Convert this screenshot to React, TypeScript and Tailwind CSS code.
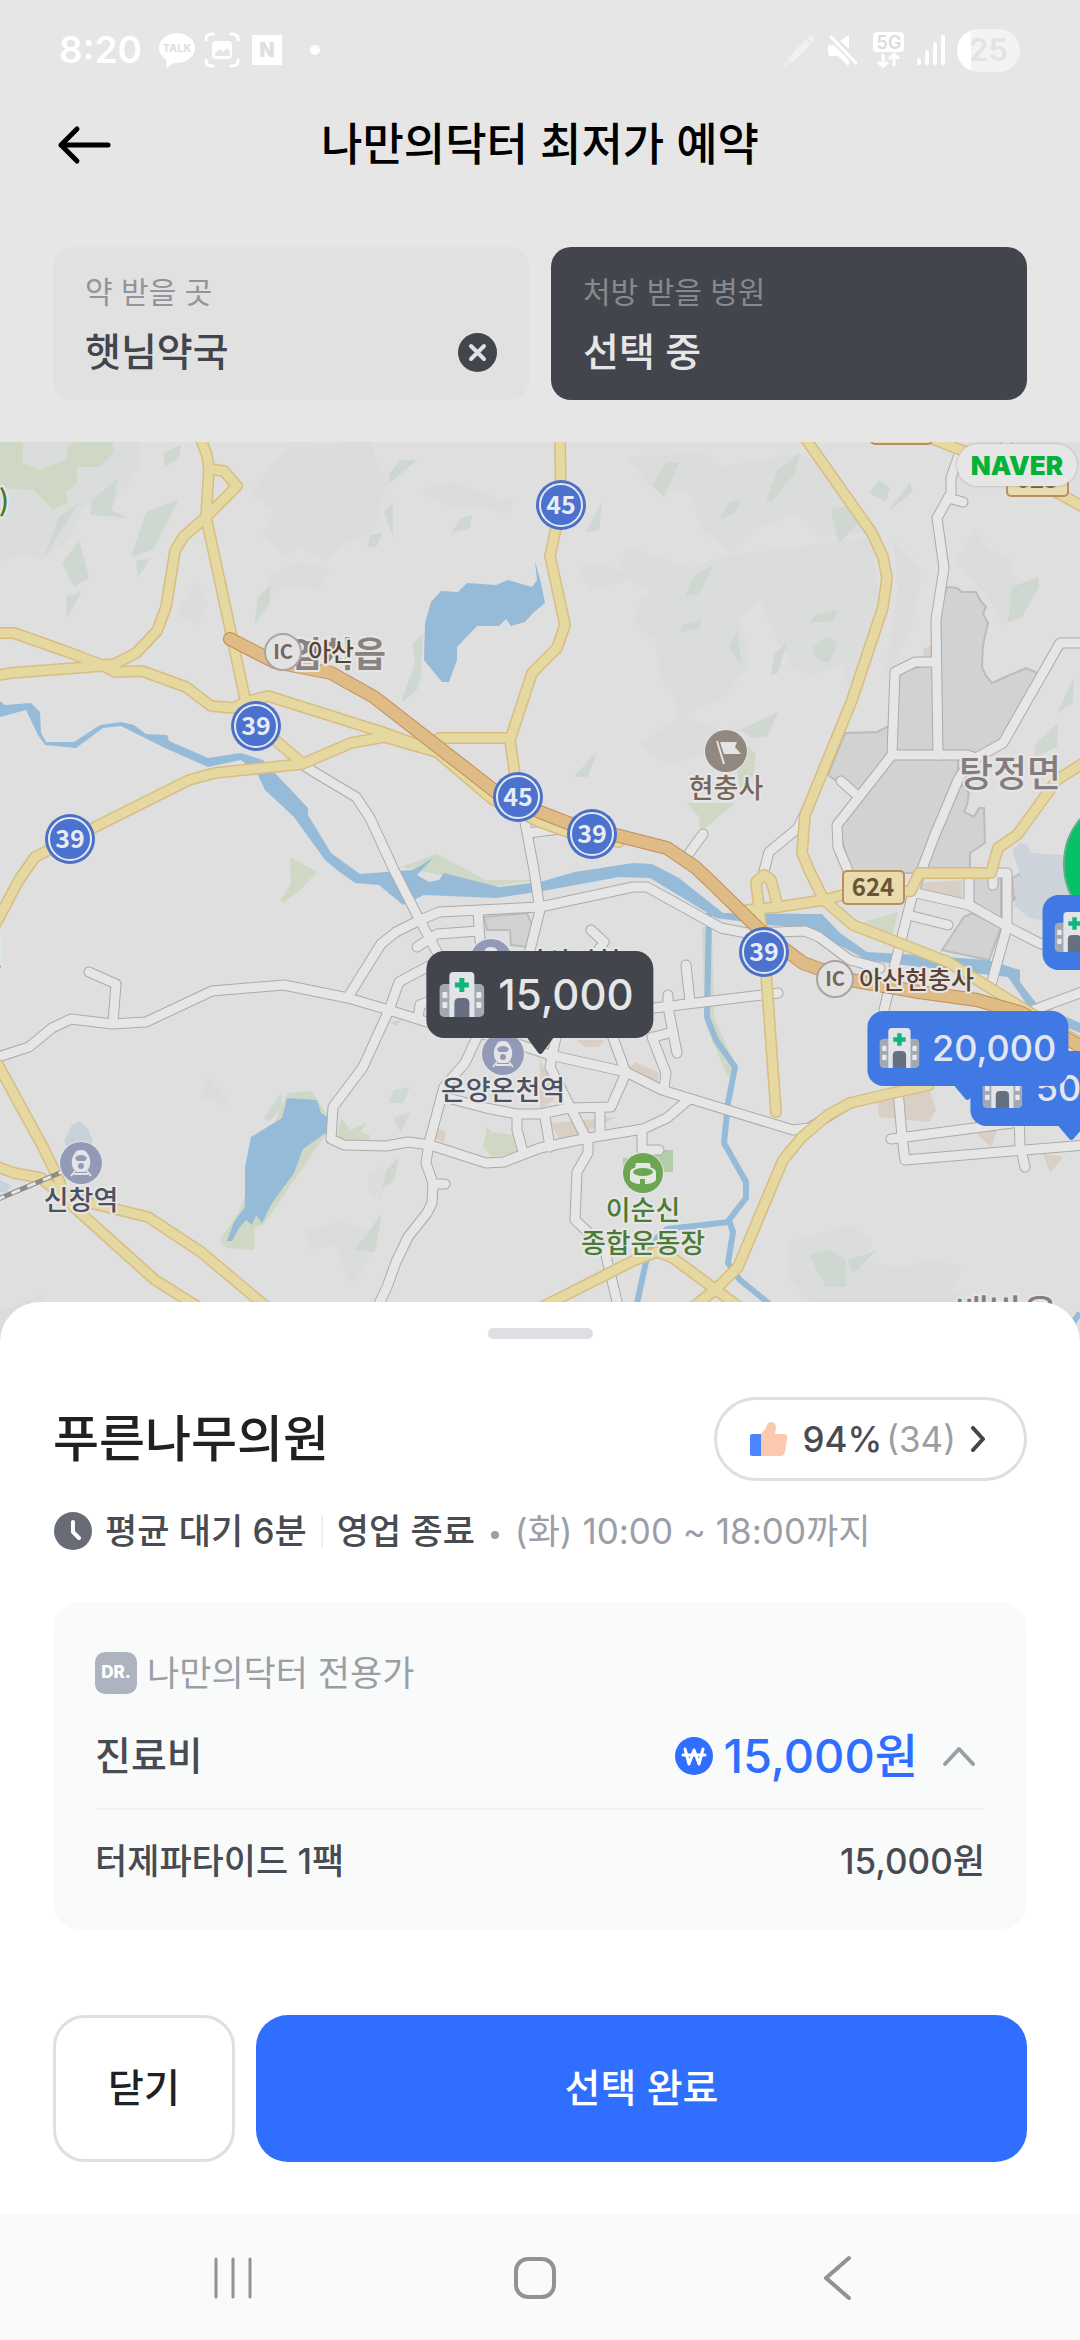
import React from "react";

/* ---------- Map data, in map units (1080 wide) ---------- */

const FAINT = [
  "24,442 141,442 139,467 114,502 83,507 69,540 41,560 21,553 0,563 0,442",
  "290,448 350,442 372,442 378,470 389,480 380,505 375,533 350,540 327,560 300,548 286,557 262,535 275,510 250,495 268,470",
  "270,575 300,562 330,570 320,590 290,585 262,600",
  "420,490 455,482 500,500 515,497 508,515 480,505 455,510",
  "176,615 195,582 208,603 198,625",
  "626,457 705,453 719,467 800,453 840,477 870,533 822,537 795,513 750,532 731,553 700,527 692,493 654,490",
  "578,570 597,562 620,572 626,547 657,557 690,568 712,560 730,555 790,548 871,537 880,600 866,660 850,690 843,663 815,675 795,670 778,640 760,600 740,620 750,665 720,700 678,717 672,690 660,680 655,640 633,623 640,600 654,590 630,580 592,590",
  "893,540 922,570 912,627 884,680 890,640 898,590",
  "640,745 680,715 720,730 740,725 735,745 700,755 665,765",
  "306,1230 341,1222 370,1230 375,1250 362,1270 350,1285 335,1245 308,1249",
  "368,1175 384,1165 382,1200 370,1195",
  "207,1077 227,1097 229,1107 200,1097",
  "0,1312 46,1293 43,1310 30,1345 0,1345",
  "786,1243 850,1225 872,1240 866,1262 902,1267 936,1260 962,1267 953,1290 984,1307 815,1307 791,1280",
  "955,560 975,530 990,550 1010,560 1020,600 1005,625 990,600",
];

const SHADES = [
  "146,512 179,499 153,550 131,557",
  "79,540 89,578 74,587 62,563",
  "43,560 59,517 79,503",
  "92,500 118,478 112,510 128,518 90,515",
  "164,453 181,445 179,458 164,468",
  "136,560 150,559 138,577",
  "66,597 82,591 67,618",
  "258,597 271,585 269,605 254,624",
  "389,473 401,460 417,460 389,484",
  "384,512 393,502 393,537",
  "451,533 461,518 472,515 470,528",
  "367,548 370,535 382,533 377,546",
  "401,703 415,663 413,643 423,634 421,677 417,690",
  "652,485 667,462 679,463 664,497",
  "766,500 778,470 800,453 795,473 771,502",
  "719,520 728,503 741,499 735,513",
  "831,510 855,503 864,517 839,543",
  "869,493 879,480 890,488 886,502",
  "888,511 910,483 913,492",
  "685,597 693,577 713,565 700,593",
  "809,623 815,615 838,609 833,621",
  "813,647 826,637 838,642 829,663 814,657",
  "729,648 738,629 741,665",
  "771,675 774,655 787,642 778,673",
  "740,730 778,712 767,737 753,738",
  "680,633 682,625 701,620 701,628",
  "1012,587 1038,577 1039,587 1022,617 1008,622",
  "1057,713 1074,677 1073,703",
  "1034,757 1036,743 1058,723 1057,747",
  "573,777 597,752 588,777",
  "585,533 602,502 599,530",
  "264,1118 281,1092 282,1107 269,1122",
  "389,1103 394,1090 410,1087 403,1103",
  "393,1118 410,1112 401,1133",
  "382,1190 386,1170 399,1157 394,1180",
  "355,1250 382,1213 375,1252",
  "809,1255 831,1250 846,1260 846,1287 826,1287",
  "848,1260 877,1250 853,1274",
];

const PARKS = [
  "0,442 23,442 22,463 40,470 65,460 68,446 75,442 112,442 114,452 100,467 77,467 77,483 66,492 68,502 53,510 34,490 0,488",
  "687,803 735,803 705,828 700,828 699,817",
  "747,745 756,755 753,777 740,790 735,760",
  "287,1093 312,1091 319,1103 329,1118 327,1133 263,1225 255,1227 254,1250 226,1248 220,1240 238,1213",
  "341,1118 351,1130 368,1122 360,1132 370,1135 368,1141 337,1139",
  "290,857 317,872 303,887 284,903 280,901 291,883",
  "487,1127 492,1132 513,1135 517,1153 492,1157 483,1147",
  "401,867 437,854 486,880 540,880 487,887 440,875",
  "860,923 898,912 892,937",
  "702,927 712,927 714,1017 736,1067 728,1078 705,1023",
];

const TAN = [
  "877,1100 929,1088 936,1110 929,1122 879,1117",
  "976,1133 998,1128 991,1147",
  "1043,1153 1063,1157 1050,1173",
  "576,1040 605,1040 598,1047 585,1047",
  "626,1070 636,1062 659,1073 657,1083 643,1080",
  "540,1060 549,1077 554,1100 540,1110",
  "550,1123 616,1117 595,1128 560,1140",
  "437,1127 446,1133 444,1143 432,1137",
  "922,883 962,880 962,898 915,890",
  "389,1022 402,1020 396,1026",
  "923,650 932,644 934,657 924,660",
];

const DISTRICTS = [
  "947,587 957,588 962,592 976,592 980,600 986,607 983,614 988,623 983,645 982,667 986,676 992,683 1010,675 1026,668 1038,673 1003,743 976,755 938,752 936,620",
  "895,672 936,663 938,755 893,755",
  "845,733 877,732 891,725 891,757 859,797 828,775",
  "893,758 958,758 958,780 934,837 919,873 852,873 837,825",
  "969,793 967,805 964,812 974,817 979,808 984,808 985,843 970,853 970,870 919,873 958,780",
  "964,917 972,913 1001,927 989,960 942,950",
  "972,877 1001,877 1001,920 972,903",
  "1012,878 1020,874 1026,885 1014,900",
  "484,917 527,913 534,930 527,947 511,945 510,930 487,930",
];

const LAKES = [
  "441,591 458,592 467,583 496,585 508,580 532,587 537,580 535,561 541,583 545,603 534,612 525,622 511,626 506,619 499,626 477,626 457,647 457,660 449,682 442,682 424,660 425,623 431,602",
  "287,1098 317,1100 321,1113 329,1118 327,1132 303,1149 294,1173 272,1203 262,1223 256,1215 252,1225 246,1220 239,1228 232,1241 227,1241 234,1222 245,1207 245,1167 251,1137 282,1118",
  "0,701 5,705 31,703 40,712 41,733 46,742 74,742 100,725 121,722 134,725 146,734 167,735 169,741 208,758 241,753 263,760 275,773 308,808 308,815 331,853 360,874 413,870 433,858 417,875 429,882 439,880 444,873 499,887 540,882 575,872 633,863 652,864 679,878 723,913 822,914 840,933 867,952 919,955 988,960 1020,970 1020,982 1036,1003 1080,1023 1080,1033 1032,1012 1008,977 919,967 867,960 833,942 805,927 767,925 716,918 650,878 619,877 543,891 496,898 424,895 403,905 379,885 355,883 337,870 325,860 294,817 265,790 258,775 241,760 208,767 165,748 121,726 103,728 76,748 45,745 38,735 26,710 0,717",
];

const LOCAL_ROADS = [
  "306,767 319,775 356,797 370,818 394,870 418,917 437,952",
  "-5,1058 29,1047 52,1028 71,1019 112,1024 146,1022 212,991 284,985 348,998 389,1010 427,1022 500,1038 550,1055 626,1072 662,1090 688,1098 793,1130 809,1128 850,1103",
  "89,972 116,984 113,1023",
  "348,997 381,944 396,932 418,921 439,912 540,907 633,887 647,887 721,928 747,933 805,931 819,937 850,960 880,968",
  "417,947 437,934 479,931",
  "478,912 480,940 484,965",
  "525,822 534,870 540,910 530,950 524,975",
  "528,833 560,829",
  "440,960 399,982 389,1010 363,1067 333,1107 331,1139 344,1145 386,1146 408,1142 430,1145 486,1163 504,1162 540,1148 588,1138 643,1129 667,1118 688,1100",
  "418,1018 420,1005 432,1000",
  "478,1035 465,1063 444,1087 429,1143 426,1163 433,1183 432,1203 427,1213 408,1237 396,1262 387,1287 376,1310",
  "433,1184 445,1184",
  "444,1097 486,1108 517,1114 540,1114 569,1108 611,1107 626,1073 612,1035",
  "517,1115 517,1130 523,1152",
  "545,1117 550,1147",
  "556,1037 550,1067 588,1142 588,1153 577,1172 575,1220 604,1247 619,1310",
  "600,1108 600,1133",
  "642,1132 642,1150 659,1150",
  "654,1008 778,993",
  "686,965 690,1002",
  "668,995 668,1007 677,1053",
  "654,1037 673,1032",
  "652,1037 666,1073 664,1088",
  "591,930 604,942 597,952",
  "1007,440 1003,460",
  "960,452 951,478 951,493 937,518 944,568 936,620 938,755",
  "948,498 963,502",
  "936,662 915,662 895,672 892,755 859,797 837,825 838,847 852,880",
  "841,781 859,797",
  "893,755 967,755 976,758 1003,743 1060,643 1085,643",
  "972,758 958,780 934,837 919,877 912,897 896,960 884,1010",
  "912,892 969,905 1008,927 1039,943 1060,950",
  "969,880 969,905",
  "985,873 1007,873 1007,927 991,985",
  "908,915 948,925",
  "993,873 993,885",
  "815,792 798,828 769,852 763,875",
  "703,834 690,852",
  "898,1090 902,1137 905,1160 1085,1145",
  "891,1139 1012,1123",
  "1019,1120 1020,1145 1025,1167",
  "1020,1015 1085,991",
];

const MAIN_ROADS = [
  "201,440 207,455 209,469 206,517 231,633 245,699",
  "209,469 224,471 237,486 206,517 183,537 175,551 166,607 157,631 136,653 115,664 102,665",
  "-5,633 14,633 65,651 102,665 115,672 142,671 186,687 211,706 234,708 245,702 268,696 382,732 437,752 492,799 540,822 568,832 619,842",
  "-5,676 10,673 102,666",
  "257,730 275,740 302,763",
  "-5,925 19,880 35,857 69,840 189,780 215,773 302,764 351,743 384,737 437,752",
  "427,747 439,738 509,738",
  "560,440 561,505 550,556 565,625 557,648 532,673 510,740 517,790",
  "805,438 872,533 883,557 887,578 883,607 852,700 805,815 802,853 809,870 824,900 853,925 948,962 1029,1012 1085,1046",
  "930,438 1000,465 1060,494 1085,508",
  "1085,762 1057,780 1017,835 998,848 991,873 919,873 911,891 843,895 824,900 778,907 747,910",
  "762,935 756,882 764,875 771,880 778,907",
  "763,930 766,973 776,1112",
  "929,1085 884,1095 850,1103 828,1115 802,1137 783,1160 738,1267 717,1288 690,1310",
  "540,1308 635,1260 657,1252 673,1258 743,1310",
  "-2,1065 43,1147 59,1180 64,1198 86,1218 155,1280 203,1310",
  "-2,1167 14,1173 41,1178 62,1195 90,1203 148,1217 201,1252 270,1310",
];

const HIGHWAY =
  "230,639 275,662 331,673 374,697 496,792 540,812 568,823 667,848 695,867 712,883 762,932 803,963 850,980 919,992 977,1000 1022,1013 1090,1052";

const STREAMS = [
  "709,913 707,1017 716,1040 735,1067 728,1103 724,1143 746,1182 746,1198 729,1220 733,1232 728,1263 740,1280 772,1306",
  "729,1222 667,1229 655,1240 647,1257 636,1308",
  "1080,1313 1071,1325 1060,1342",
];

const SHIELDS = [
  { x: 256, y: 726, n: "39" },
  { x: 70, y: 839, n: "39" },
  { x: 518, y: 797, n: "45" },
  { x: 561, y: 505, n: "45" },
  { x: 592, y: 834, n: "39" },
  { x: 764, y: 952, n: "39" },
];

const MAP_FONT = "font-['Noto_Sans_CJK_KR',sans-serif]";

type Line = { points: string[]; edge: string; fill: string; outer: number; inner: number };

function Roads({ points, edge, fill, outer, inner }: Line) {
  return (
    <g fill="none" strokeLinejoin="round" strokeLinecap="round">
      {points.map((p) => (
        <polyline key={p} points={p} stroke={edge} strokeWidth={outer} />
      ))}
      {points.map((p) => (
        <polyline key={p} points={p} stroke={fill} strokeWidth={inner} />
      ))}
    </g>
  );
}

function Areas({ points, fill, stroke }: { points: string[]; fill: string; stroke?: string }) {
  return (
    <g fill={fill} stroke={stroke ?? "none"} strokeWidth={2}>
      {points.map((p) => (
        <polygon key={p} points={p} />
      ))}
    </g>
  );
}

type LabelProps = {
  x: number;
  y: number;
  size: number;
  color: string;
  children: string;
  anchor?: "start" | "middle" | "end";
  weight?: number;
};

function Label({ x, y, size, color, children, anchor = "middle", weight = 500 }: LabelProps) {
  return (
    <text
      x={x}
      y={y}
      fontSize={size}
      fill={color}
      textAnchor={anchor}
      fontWeight={weight}
      stroke="#e6e6e6"
      strokeWidth={4}
      strokeLinejoin="round"
      paintOrder="stroke"
    >
      {children}
    </text>
  );
}

function Station({ x, y }: { x: number; y: number }) {
  return (
    <g transform={`translate(${x} ${y})`}>
      <circle r="22" fill="#e6e6e6" />
      <circle r="21" fill="#929ab8" />
      <path
        d="M-6-10Q-5-13 0-13Q5-13 6-10Q10-5 9 2Q8 7 4 9H-4Q-8 7-9 2Q-10-5-6-10Z"
        fill="#e4e4e6"
      />
      <path d="M-6-5Q-4-8 0-8Q4-8 6-5L4-2H-4Z" fill="#929ab8" />
      <circle cy="3" r="3" fill="#929ab8" />
      <path d="M-6 8L-10 13M6 8L10 13M-7 11H7" stroke="#e4e4e6" strokeWidth="2" fill="none" />
    </g>
  );
}

function RouteSign({ x, y, n }: { x: number; y: number; n: string }) {
  return (
    <g>
      <rect x={x} y={y} width="61" height="33" rx="4" fill="#e8dcae" stroke="#b98f62" strokeWidth="2" />
      <text x={x + 30} y={y + 25} fontSize="24" fontWeight="700" fill="#6b5538" textAnchor="middle">
        {n}
      </text>
    </g>
  );
}

function Interchange({ x, y }: { x: number; y: number }) {
  return (
    <g>
      <circle cx={x} cy={y} r="18" fill="#e2e2e2" stroke="#aaa4a1" strokeWidth="2" />
      <text x={x} y={y + 7} fontSize="20" fontWeight="700" fill="#76665b" textAnchor="middle">
        IC
      </text>
    </g>
  );
}

function MapDrawing() {
  return (
    <svg viewBox="0 442 1080 900" className={`block h-auto w-full bg-[#dfdfdf] ${MAP_FONT}`} role="img" aria-label="지도">
      <Areas points={FAINT} fill="#dadddb" />
      <Areas points={SHADES} fill="#cfd7d1" />
      <Areas points={PARKS} fill="#cfd8c5" />
      <Areas points={TAN} fill="#dacfc5" />
      <Areas points={DISTRICTS} fill="#d2d2d2" stroke="#bcbcbc" />
      <polygon points="655,1150 673,1150 673,1172 623,1172 623,1158 654,1158" fill="#b2cda9" />
      <polygon
        points="1012,850 1020,843 1028,845 1030,853 1063,855 1080,850 1080,935 1050,922 1029,918 1014,905 1022,880"
        fill="#ccd3da"
      />
      <polygon points="64,1141 72,1125 79,1121 88,1129 93,1141 86,1155 70,1155" fill="#c8d2da" />
      <polygon points="0,1180 12,1186 6,1192 0,1192" fill="#c8d2da" />
      <Areas points={LAKES} fill="#95bbd9" />
      <g fill="none" stroke="#95bbd9" strokeWidth="6" strokeLinejoin="round">
        {STREAMS.map((p) => (
          <polyline key={p} points={p} />
        ))}
      </g>
      <Roads points={LOCAL_ROADS} edge="#ababab" fill="#e6e6e6" outer={11} inner={9} />
      <Roads points={MAIN_ROADS} edge="#d8bd82" fill="#e5d9a1" outer={12} inner={9} />
      <Roads points={[HIGHWAY]} edge="#c58c56" fill="#dfbb86" outer={14} inner={12} />
      <path d="M-4 1200L62 1172" stroke="#8f8b88" strokeWidth="5" />
      <path d="M-4 1200L62 1172" stroke="#e6e6e6" strokeWidth="3" strokeDasharray="9 8" />

      <Label x={386} y={667} size={35} color="#89827f" anchor="end" weight={700}>염치읍</Label>
      <Interchange x={283} y={652} />
      <Label x={308} y={661} size={25} color="#5c432f" anchor="start">아산</Label>
      <Label x={9} y={511} size={29} color="#457a35" anchor="end">)</Label>
      <Label x={4} y={966} size={36} color="#857d7c" anchor="end">선장면</Label>
      <Label x={1010} y={787} size={37} color="#857d7c">탕정면</Label>
      <Label x={1006} y={1327} size={37} color="#857d7c">배방읍</Label>

      {SHIELDS.map((s) => (
        <g key={`${s.x}-${s.y}`}>
          <circle cx={s.x} cy={s.y} r="25" fill="#4a70c8" />
          <circle cx={s.x} cy={s.y} r="21" fill="#4c72cf" stroke="#e6e9f2" strokeWidth="2" />
          <text x={s.x} y={s.y + 9} fontSize="25" fontWeight="700" fill="#e8ebf3" textAnchor="middle">
            {s.n}
          </text>
        </g>
      ))}

      <RouteSign x={843} y={871} n="624" />
      <RouteSign x={1007} y={463} n="623" />
      <RouteSign x={871} y={411} n="628" />

      <circle cx="726" cy="751" r="22" fill="#e6e6e6" />
      <circle cx="726" cy="751" r="21" fill="#91887f" />
      <path d="M717 741L724 764" stroke="#e4e4e4" strokeWidth="2" />
      <path d="M720 742H737L735 747L741 754H724Z" fill="#e4e4e4" />
      <Label x={726} y={798} size={27} color="#7a6559">현충사</Label>

      <Interchange x={835} y={979} />
      <Label x={859} y={989} size={25} color="#5c432f" anchor="start">아산현충사</Label>

      <Station x={491} y={960} />
      <Label x={571} y={972} size={27} color="#4c505f">아산시청</Label>
      <Station x={503} y={1054} />
      <Label x={503} y={1100} size={27} color="#4c505f">온양온천역</Label>
      <Station x={81} y={1163} />
      <Label x={81} y={1210} size={27} color="#4c505f">신창역</Label>

      <circle cx="643" cy="1173" r="21" fill="#e6e6e6" />
      <circle cx="643" cy="1173" r="20" fill="#6ba653" />
      <path d="M636 1163H650L651 1168H635Z" fill="#e4e8e2" />
      <path d="M630 1172Q630 1167 643 1167Q656 1167 656 1172V1180Q653 1184 645 1184V1179H640V1184Q633 1184 630 1180Z" fill="#e4e8e2" />
      <ellipse cx="643" cy="1172" rx="10" ry="4" fill="#6ba653" />
      <Label x={643} y={1220} size={27} color="#4b7b35">이순신</Label>
      <Label x={643} y={1253} size={27} color="#4b7b35">종합운동장</Label>

      <circle cx="1134" cy="864" r="70" fill="#06c167" stroke="#5fae86" strokeWidth="2" />
    </svg>
  );
}

function HospitalIcon({ className }: { className: string }) {
  return (
    <svg viewBox="0 0 45 45" className={className} aria-hidden="true">
      <rect x="0" y="12" width="45" height="33" rx="5" fill="#a3a9b4" />
      <path d="M10 45V4Q10 0 14 0H31Q35 0 35 4V45Z" fill="#e2e4e7" />
      <path d="M15 45V31Q15 26 20 26H25Q30 26 30 31V45Z" fill="#677080" />
      <path d="M22.500 6V20M15.500 13H29.500" stroke="#0fb57d" strokeWidth="5" />
      <g fill="#e6e8ea">
        <rect x="3" y="20" width="5" height="6" rx="1" />
        <rect x="3" y="30" width="5" height="6" rx="1" />
        <rect x="37" y="20" width="5" height="6" rx="1" />
        <rect x="37" y="30" width="5" height="6" rx="1" />
      </g>
    </svg>
  );
}

function PricePin({ price, place }: { price: string; place: string }) {
  return (
    <button type="button" className={`absolute flex -translate-x-1/2 -translate-y-full flex-col items-center text-[#e2e6f0] ${place}`}>
      <span className="flex h-[75px] items-center gap-[13px] rounded-2xl bg-[#4078e4] px-3 text-[36px] font-medium">
        <HospitalIcon className="size-10" />
        {price}
      </span>
      <svg viewBox="0 0 26 14" className="h-[14px] w-[26px]" aria-hidden="true">
        <path d="M0 0H26L15 13Q13 15 11 13Z" fill="#4078e4" />
      </svg>
    </button>
  );
}

function SelectedPin() {
  return (
    <button type="button" className="absolute top-[68%] left-1/2 flex -translate-x-1/2 -translate-y-full flex-col items-center text-[#e6e6e6]">
      <span className="flex h-[87px] items-center gap-[14px] rounded-[18px] bg-[#42454c] pr-5 pl-[13px] text-[42px] font-medium">
        <HospitalIcon className="size-[45px]" />
        15,000
      </span>
      <svg viewBox="0 0 26 16" className="h-4 w-[26px]" aria-hidden="true">
        <path d="M0 0H26L15 15Q13 17 11 15Z" fill="#42454c" />
      </svg>
    </button>
  );
}

function StatusBar() {
  return (
    <div className="flex h-[100px] items-center justify-between pr-[60px] pl-[59px] text-white">
      <div className="flex items-center gap-3">
        <span className="mr-1 text-[37px] font-semibold">8:20</span>
        <svg viewBox="0 0 38 38" className="size-[38px]" aria-hidden="true">
          <ellipse cx="19" cy="17" rx="18" ry="15" fill="#fff" />
          <path d="M9 27L8 37L19 30Z" fill="#fff" />
          <text x="19" y="21" fontSize="11" fontWeight="700" fill="#dedede" textAnchor="middle">
            TALK
          </text>
        </svg>
        <svg viewBox="0 0 36 36" className="-ml-1 size-9" fill="none" stroke="#fff" strokeWidth="3" strokeLinecap="round" aria-hidden="true">
          <path d="M2 8V7Q2 2 8 2H9M27 2H28Q34 2 34 7V8M34 28V29Q34 34 28 34H27M9 34H8Q2 34 2 29V28" />
          <rect x="8" y="9" width="20" height="18" rx="4" fill="#fff" stroke="none" />
          <path d="M11 24V21L16 17L19 20L23 16L26 20V24Z" fill="#e6e6e6" stroke="none" />
        </svg>
        <span className="flex size-[30px] items-center justify-center bg-white text-[20px] font-black text-[#e0e0e0]">N</span>
        <span className="ml-4 size-[10px] rounded-full bg-white" />
      </div>
      <div className="flex items-center gap-3">
        <svg viewBox="0 0 32 32" className="size-8" fill="#f1f1f1" aria-hidden="true">
          <path d="M4 24L22 5L27 10L9 28L4 29ZM24 4L26 2Q31 2 30 7L28 9ZM2 28L4 30L1 32L0 31Z" />
        </svg>
        <svg viewBox="0 0 30 32" className="h-8 w-[30px]" fill="#fff" aria-hidden="true">
          <path d="M21 1V15L12 7ZM0 13Q0 11 3 11H6L21 26V31Q19 32 17 29L10 22H3Q0 22 0 19Z" />
          <path d="M3 3L28 29" stroke="#fff" strokeWidth="3" strokeLinecap="round" />
        </svg>
        <svg viewBox="0 0 32 36" className="ml-[3px] h-9 w-8" aria-hidden="true">
          <rect x="0" y="0" width="31" height="20" rx="4" fill="#fff" />
          <text x="16" y="17" fontSize="18" fontWeight="600" fill="#dcdcdc" textAnchor="middle">
            5G
          </text>
          <path d="M10 22V34M5 30L10 34L15 30M21 34V23M16 27L21 22L26 27" fill="none" stroke="#fff" strokeWidth="3" />
        </svg>
        <svg viewBox="0 0 28 32" className="h-8 w-7" stroke="#fff" strokeWidth="4" strokeLinecap="round" aria-hidden="true">
          <path d="M2 29V26M10 29V18M18 29V10M26 29V3" />
        </svg>
        <span className="flex h-[43px] w-[63px] items-center justify-center rounded-full bg-linear-to-r from-white from-23% to-[#f3f3f3] to-23% text-[31px] font-semibold text-[#e3e3e3]">
          25
        </span>
      </div>
    </div>
  );
}

export default function App() {
  return (
    <div className="flex min-h-screen flex-col bg-[#e6e6e6] font-['Inter','Noto_Sans_CJK_KR',sans-serif]">
      <StatusBar />

      <header className="grid h-[90px] grid-cols-[1fr_auto_1fr] items-center px-[57px]">
        <button type="button" aria-label="뒤로" className="justify-self-start">
          <svg viewBox="0 0 54 40" className="h-10 w-[54px]" fill="none" stroke="#000" strokeWidth="5" strokeLinecap="round" strokeLinejoin="round">
            <path d="M51 20H4M20 4L4 20L20 36" />
          </svg>
        </button>
        <h1 className="text-[45px] leading-[60px] font-medium text-black">나만의닥터 최저가 예약</h1>
      </header>

      <div className="grid grid-cols-2 gap-[22px] px-[53px] pt-[57px] pb-[42px]">
        <section className="flex flex-col gap-5 rounded-[20px] bg-[#e1e1e1] px-8 pt-[27px] pb-[26px]">
          <h2 className="text-[30px] leading-[36px] text-[#919499]">약 받을 곳</h2>
          <div className="flex items-center justify-between">
            <p className="text-[39px] leading-[44px] font-medium text-[#42454c]">햇님약국</p>
            <button type="button" aria-label="지우기">
              <svg viewBox="0 0 39 39" className="size-[39px]">
                <circle cx="19.500" cy="19.500" r="19.500" fill="#42454c" />
                <path d="M13 13L26 26M26 13L13 26" stroke="#e1e1e1" strokeWidth="4" strokeLinecap="round" />
              </svg>
            </button>
          </div>
        </section>
        <section className="flex flex-col gap-5 rounded-[20px] bg-[#42454c] px-8 pt-[27px] pb-[26px]">
          <h2 className="text-[30px] leading-[36px] text-[#87898f]">처방 받을 병원</h2>
          <p className="text-[39px] leading-[44px] font-medium text-[#e6e6e6]">선택 중</p>
        </section>
      </div>

      <main className="relative overflow-hidden">
        <MapDrawing />
        <span className="absolute top-0.5 right-[3px] flex h-[42px] items-center rounded-full bg-[#e6e6e6] px-[14px] text-[26px] font-black text-[#03b237] shadow-[0_0_3px_#aaa]">
          NAVER
        </span>
        <PricePin price="50,000" place="top-[77.500%] left-[99.200%]" />
        <PricePin price="20,000" place="top-[73.100%] left-[89.600%]" />
        <PricePin price="15,000" place="top-[60.200%] left-[105.500%]" />
        <SelectedPin />
      </main>

      <section className="relative -mt-10 rounded-t-[40px] bg-white px-[53px] pt-[26px] pb-[52px]">
        <div className="mx-auto h-[11px] w-[105px] rounded-full bg-[#dddfe3]" />

        <div className="mt-[58px] flex items-center justify-between">
          <h2 className="text-[50px] leading-[64px] font-medium text-[#202124]">푸른나무의원</h2>
          <button type="button" className="flex h-[84px] items-center rounded-full border-3 border-[#dddfe3] pr-[38px] pl-[33px] text-[35px] text-[#494b53]">
            <svg viewBox="0 0 38 36" className="mr-[14px] h-9 w-[38px]" aria-hidden="true">
              <path d="M10 14L16 7Q17 1 21 1Q26 1 26 7L25 13H34Q38 13 37 18L35 31Q34 35 31 35H10Z" fill="#fac9b0" />
              <path d="M0 15Q0 13 2 13H11V35H2Q0 35 0 33Z" fill="#4a85ff" />
            </svg>
            <span className="mr-1 font-medium">94%</span>
            <span className="text-[#9b9ea6]">(34)</span>
            <svg viewBox="0 0 16 26" className="ml-[14px] h-[26px] w-4" fill="none" stroke="#42454c" strokeWidth="4" strokeLinecap="round" strokeLinejoin="round" aria-hidden="true">
              <path d="M3 2L13 13L3 24" />
            </svg>
          </button>
        </div>

        <div className="mt-7 flex h-11 items-center text-[35px] leading-[44px] text-[#494b53]">
          <svg viewBox="0 0 40 40" className="mr-3 size-10" aria-hidden="true">
            <circle cx="20" cy="20" r="19" fill="#696c76" />
            <path d="M20 11V21L26 27" fill="none" stroke="#fff" strokeWidth="4" strokeLinecap="round" strokeLinejoin="round" />
          </svg>
          <span className="font-medium">평균 대기 6분</span>
          <span className="mx-[14px] h-8 w-0.5 bg-[#eef0f0]" />
          <span className="font-medium">영업 종료</span>
          <span className="mt-2 mr-4 ml-4 size-2 rounded-full bg-[#9b9ea6]" />
          <span className="text-[#9b9ea6]">(화) 10:00 ~ 18:00까지</span>
        </div>

        <div className="mt-[49px] rounded-[28px] bg-[#f9fbfa] px-[42px] pt-[50px] pb-[47px]">
          <div className="flex h-[42px] items-center gap-[10px] text-[35px] text-[#9b9ea6]">
            <span className="flex size-[42px] items-center justify-center rounded-[10px] bg-[#adb4c0] text-[17px] font-extrabold text-white">DR.</span>
            나만의닥터 전용가
          </div>
          <div className="mt-[34px] flex h-14 items-center">
            <span className="flex-1 text-[39px] font-medium text-[#494b53]">진료비</span>
            <svg viewBox="0 0 38 38" className="mr-[10px] size-[38px]" aria-hidden="true">
              <circle cx="19" cy="19" r="19" fill="#2f6eff" />
              <path d="M10 12L14 27L19 13L24 27L28 12" fill="none" stroke="#fff" strokeWidth="3" strokeLinejoin="round" strokeLinecap="round" />
              <path d="M8 18H30" stroke="#fff" strokeWidth="3" strokeLinecap="round" />
            </svg>
            <span className="text-[47px] leading-[56px] font-medium text-[#2f6eff]">15,000원</span>
            <button type="button" aria-label="접기" className="mr-[9px] ml-6">
              <svg viewBox="0 0 34 22" className="h-[22px] w-[34px]" fill="none" stroke="#9b9ea6" strokeWidth="4" strokeLinecap="round" strokeLinejoin="round">
                <path d="M3 19L17 4L31 19" />
              </svg>
            </button>
          </div>
          <hr className="mt-6 border-t-2 border-[#eff1f1]" />
          <div className="mt-[29px] flex justify-between text-[35px] leading-[44px] font-medium text-[#494b53]">
            <span>터제파타이드 1팩</span>
            <span>15,000원</span>
          </div>
        </div>

        <div className="mt-[85px] flex gap-[21px] text-[39px] font-medium">
          <button type="button" className="h-[147px] w-[182px] rounded-[32px] border-3 border-[#dddfe3] text-[#202124]">닫기</button>
          <button type="button" className="h-[147px] flex-1 rounded-[32px] bg-[#2f6eff] text-white">선택 완료</button>
        </div>
      </section>

      <nav className="grid h-[126px] grid-cols-3 items-center justify-items-center bg-[#fafafa] pr-[92px] pl-[82px]">
        <button type="button" aria-label="최근 앱">
          <svg viewBox="0 0 42 44" className="h-11 w-[42px]" stroke="#929292" strokeWidth="3" strokeLinecap="round">
            <path d="M4 4V42M21 4V42M38 4V42" />
          </svg>
        </button>
        <button type="button" aria-label="홈">
          <svg viewBox="0 0 44 44" className="size-11" fill="none" stroke="#929292" strokeWidth="4">
            <rect x="3" y="4" width="38" height="38" rx="12" />
          </svg>
        </button>
        <button type="button" aria-label="뒤로 가기">
          <svg viewBox="0 0 30 46" className="h-[46px] w-[30px]" fill="none" stroke="#929292" strokeWidth="4" strokeLinecap="round" strokeLinejoin="round">
            <path d="M27 4L4 24L27 44" />
          </svg>
        </button>
      </nav>
    </div>
  );
}
